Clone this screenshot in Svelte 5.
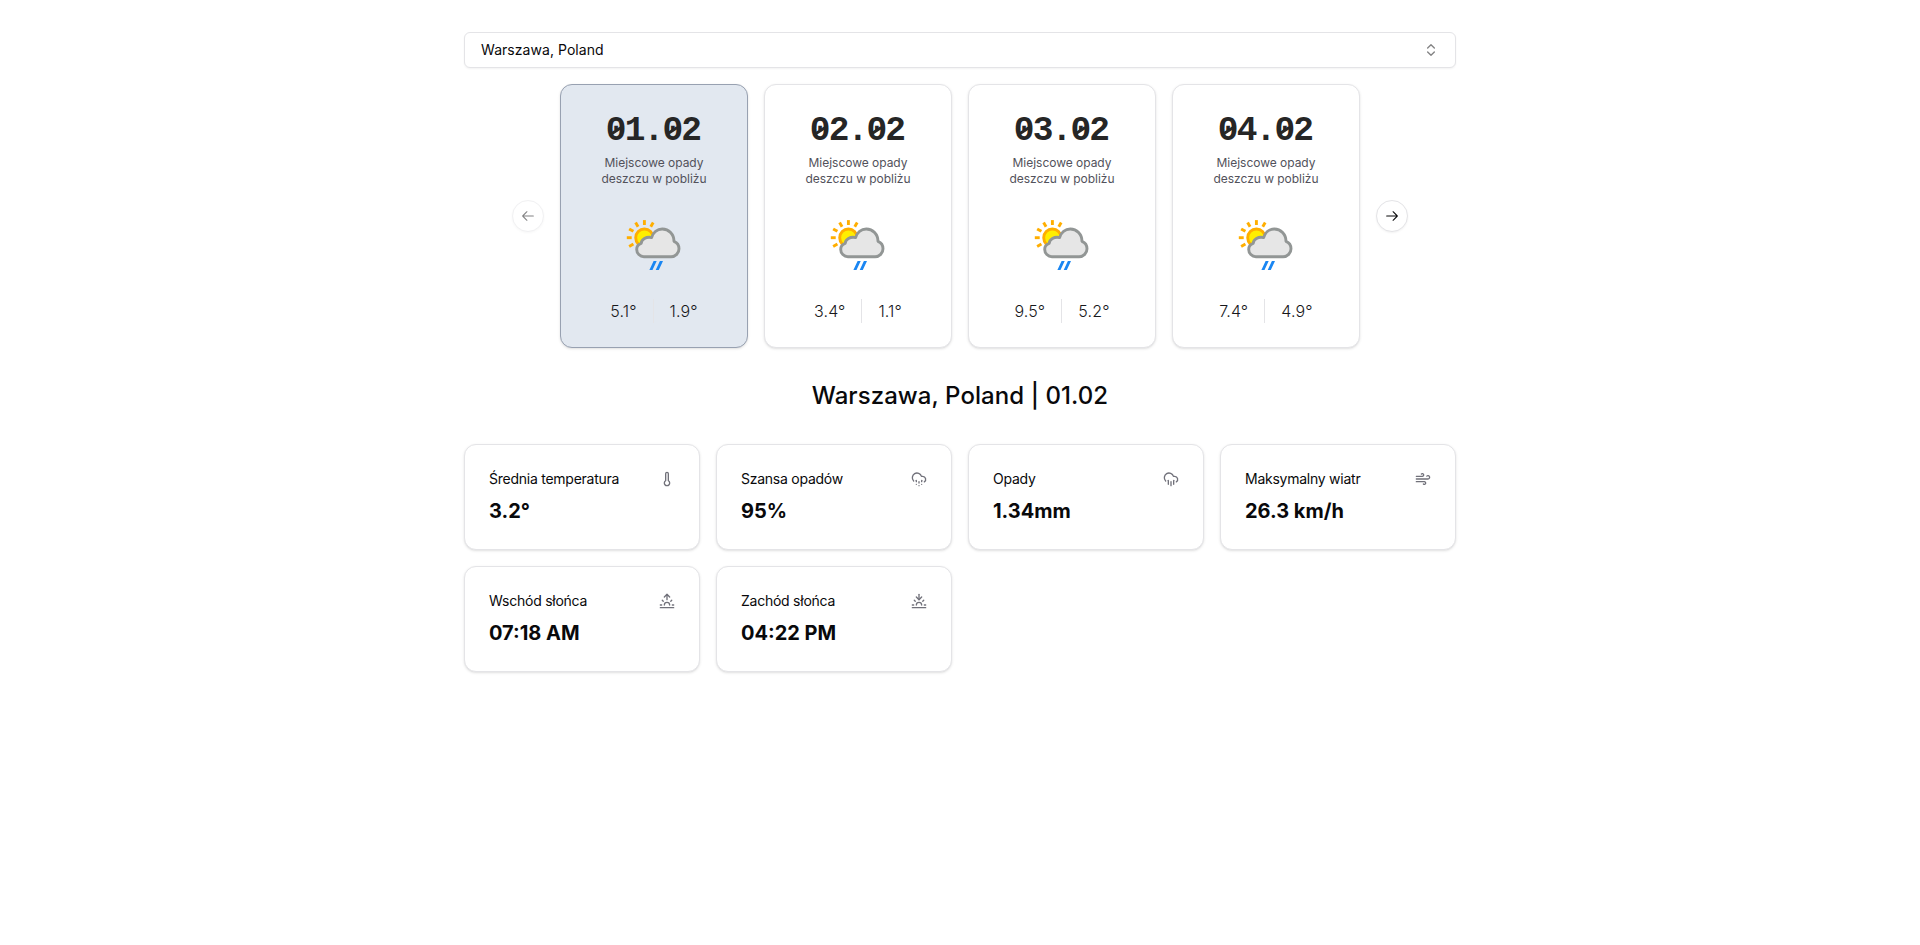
<script>
  const days = [
    { date: '01.02', max: '5.1°', min: '1.9°' },
    { date: '02.02', max: '3.4°', min: '1.1°' },
    { date: '03.02', max: '9.5°', min: '5.2°' },
    { date: '04.02', max: '7.4°', min: '4.9°' }
  ];
  const cloud = 'M4 14.899A7 7 0 1 1 15.71 8h1.79a4.5 4.5 0 0 1 2.5 8.242';
  const stats = [
    { label: 'Średnia temperatura', value: '3.2°', icon: ['M14 4v10.54a4 4 0 1 1-4 0V4a2 2 0 0 1 4 0Z'] },
    { label: 'Szansa opadów', value: '95%', icon: [cloud, 'M16 14v2', 'M8 14v2', 'M16 20h.01', 'M8 20h.01', 'M12 16v2', 'M12 22h.01'] },
    { label: 'Opady', value: '1.34mm', icon: [cloud, 'M16 14v6', 'M8 14v6', 'M12 16v6'] },
    { label: 'Maksymalny wiatr', value: '26.3 km/h', icon: ['M17.7 7.7a2.5 2.5 0 1 1 1.8 4.3H2', 'M9.6 4.6A2 2 0 1 1 11 8H2', 'M12.6 19.4A2 2 0 1 0 14 16H2'] },
    { label: 'Wschód słońca', value: '07:18 AM', icon: ['M12 2v8', 'm4.93 10.93 1.41 1.41', 'M2 18h2', 'M20 18h2', 'm19.07 10.93-1.41 1.41', 'M22 22H2', 'm8 6 4-4 4 4', 'M16 18a4 4 0 0 0-8 0'] },
    { label: 'Zachód słońca', value: '04:22 PM', icon: ['M12 10V2', 'm4.93 10.93 1.41 1.41', 'M2 18h2', 'M20 18h2', 'm19.07 10.93-1.41 1.41', 'M22 22H2', 'm16 6-4 4-4-4', 'M16 18a4 4 0 0 0-8 0'] }
  ];
  const rays = [150, 180, 210, 240, 270, 300];
  let selected = $state(0);
</script>

<main>
  <button class="select">
    <span>Warszawa, Poland</span>
    <svg width="16" height="16" viewBox="0 0 24 24" fill="none" stroke="currentColor" stroke-width="2" stroke-linecap="round" stroke-linejoin="round"><path d="m7 15 5 5 5-5" /><path d="m7 9 5-5 5 5" /></svg>
  </button>

  <section class="carousel">
    <button class="arrow" disabled aria-label="Poprzednie">
      <svg width="16" height="16" viewBox="0 0 15 15" fill="currentColor"><path d="M6.85355 3.14645C7.04882 3.34171 7.04882 3.65829 6.85355 3.85355L3.70711 7H12.5C12.7761 7 13 7.22386 13 7.5C13 7.77614 12.7761 8 12.5 8H3.70711L6.85355 11.1464C7.04882 11.3417 7.04882 11.6583 6.85355 11.8536C6.65829 12.0488 6.34171 12.0488 6.14645 11.8536L2.14645 7.85355C1.95118 7.65829 1.95118 7.34171 2.14645 7.14645L6.14645 3.14645C6.34171 2.95118 6.65829 2.95118 6.85355 3.14645Z" /></svg>
    </button>
    <div class="days">
      {#each days as day, i}
        <button class="day" class:selected={selected === i} onclick={() => (selected = i)}>
          <span class="date">{#each day.date.split('') as ch}<span class:zero={ch === '0'}>{ch}</span>{/each}</span>
          <span class="desc">Miejscowe opady deszczu w pobliżu</span>
          <svg class="weather" width="64" height="64" viewBox="0 0 64 64">
            <g stroke="#ffae00" stroke-width="2.9">
              {#each rays as a}
                <path d="M12.7 0H17.6" transform="translate(22.4 24.7) rotate({a})" />
              {/each}
              <circle cx="22.4" cy="24.7" r="8.7" fill="#ffee00" />
            </g>
            <path d="M22 43.7A7.3 7.3 0 0 1 14.7 36.4C14.7 33.4 16.5 31.2 19.2 30.3C19.6 26.5 24 23.4 29.6 24.6C31 19.5 35.3 16 40.3 16C46.8 16 52 21.3 52 28.3C55 29.5 57 32.3 57 35.7C57 40.2 53.5 43.7 49 43.7Z" fill="#e6e6e6" stroke="#929695" stroke-width="2.9" stroke-linejoin="round" />
            <path d="M31.6 48h3.1l-4.2 9h-3.1zM37.9 48h3.1l-4.2 9h-3.1z" fill="#1a86f2" />
          </svg>
          <span class="temps"><span>{day.max}</span><i></i><span>{day.min}</span></span>
        </button>
      {/each}
    </div>
    <button class="arrow" aria-label="Następne">
      <svg width="16" height="16" viewBox="0 0 15 15" fill="currentColor"><path d="M8.14645 3.14645C8.34171 2.95118 8.65829 2.95118 8.85355 3.14645L12.8536 7.14645C13.0488 7.34171 13.0488 7.65829 12.8536 7.85355L8.85355 11.8536C8.65829 12.0488 8.34171 12.0488 8.14645 11.8536C7.95118 11.6583 7.95118 11.3417 8.14645 11.1464L11.2929 8H2.5C2.22386 8 2 7.77614 2 7.5C2 7.22386 2.22386 7 2.5 7H11.2929L8.14645 3.85355C7.95118 3.65829 7.95118 3.34171 8.14645 3.14645Z" /></svg>
    </button>
  </section>

  <h1>Warszawa, Poland | {days[selected].date}</h1>

  <section class="stats">
    {#each stats as s}
      <article>
        <div class="head">
          <h2>{s.label}</h2>
          <svg width="16" height="16" viewBox="0 0 24 24" fill="none" stroke="currentColor" stroke-width="2" stroke-linecap="round" stroke-linejoin="round">
            {#each s.icon as d}<path {d} />{/each}
          </svg>
        </div>
        <div class="value">{s.value}</div>
      </article>
    {/each}
  </section>
</main>

<style>
  :global(body) { background: #fff; }
  main {
    box-sizing: border-box;
    width: 1024px;
    margin: 0 auto;
    padding: 32px 16px;
    font-family: Inter, "Liberation Sans", sans-serif;
    color: #09090b;
  }
  main * { box-sizing: border-box; }
  button { font: inherit; color: inherit; }
  svg { display: block; flex: none; }
  .select {
    display: flex;
    align-items: center;
    justify-content: space-between;
    width: 100%;
    height: 36px;
    padding: 0 16px;
    border: 1px solid #e4e4e7;
    border-radius: 6px;
    background: #fff;
    box-shadow: 0 1px 2px rgba(0, 0, 0, 0.05);
    font-size: 14px;
    line-height: 20px;
    letter-spacing: 0.05px;
  }
  .select svg { opacity: 0.5; }
  .carousel {
    display: flex;
    align-items: center;
    justify-content: center;
    gap: 16px;
    margin-top: 16px;
  }
  .days { display: flex; gap: 16px; }
  .day {
    display: flex;
    flex-direction: column;
    align-items: center;
    width: 188px;
    height: 264px;
    padding: 24px;
    border: 1px solid #e4e4e7;
    border-radius: 12px;
    background: #fff;
    box-shadow: 0 1px 3px rgba(0, 0, 0, 0.1), 0 1px 2px -1px rgba(0, 0, 0, 0.1);
  }
  .day.selected { background: #e2e8f0; border-color: #98a1b1; }
  .date {
    height: 41px;
    font: 700 34.5px/44px "Liberation Mono", monospace;
    letter-spacing: -1.8px;
    text-indent: -2px;
    color: #262626;
  }
  .zero { position: relative; text-indent: 0; }
  .zero::after {
    content: "";
    position: absolute;
    left: 5px;
    top: 18px;
    width: 11px;
    height: 2.6px;
    background: #262626;
    transform: rotate(-33deg);
  }
  .desc {
    width: 120px;
    margin-top: 5px;
    font-size: 12px;
    line-height: 16px;
    letter-spacing: -0.03px;
    color: #52525b;
    text-align: center;
  }
  .weather { margin-top: 26px; }
  .temps {
    display: flex;
    align-items: center;
    gap: 16px;
    margin-top: 22px;
    height: 24px;
    font-size: 16px;
    font-weight: 300;
    line-height: 24px;
    letter-spacing: 0.15px;
    color: #18181b;
  }
  .temps i { width: 1px; height: 24px; background: #e4e4e7; }
  .arrow {
    display: grid;
    place-items: center;
    width: 32px;
    height: 32px;
    padding: 0;
    border: 1px solid #e4e4e7;
    border-radius: 50%;
    background: #fff;
    box-shadow: 0 1px 2px rgba(0, 0, 0, 0.05);
  }
  .arrow:disabled { opacity: 0.5; }
  h1 {
    margin: 32px 0;
    font-size: 24px;
    font-weight: 500;
    line-height: 32px;
    letter-spacing: 0.07px;
    text-align: center;
  }
  .stats {
    display: grid;
    grid-template-columns: repeat(4, 1fr);
    gap: 16px;
  }
  article {
    height: 106px;
    padding: 24px;
    border: 1px solid #e4e4e7;
    border-radius: 12px;
    background: #fff;
    box-shadow: 0 1px 3px rgba(0, 0, 0, 0.1), 0 1px 2px -1px rgba(0, 0, 0, 0.1);
  }
  .head { display: flex; align-items: center; justify-content: space-between; height: 20px; }
  .head svg { color: #71717a; }
  h2 { margin: 0; font-size: 14px; font-weight: 400; line-height: 20px; letter-spacing: -0.25px; }
  .value { margin-top: 8px; font-size: 20px; font-weight: 700; line-height: 28px; }
</style>
